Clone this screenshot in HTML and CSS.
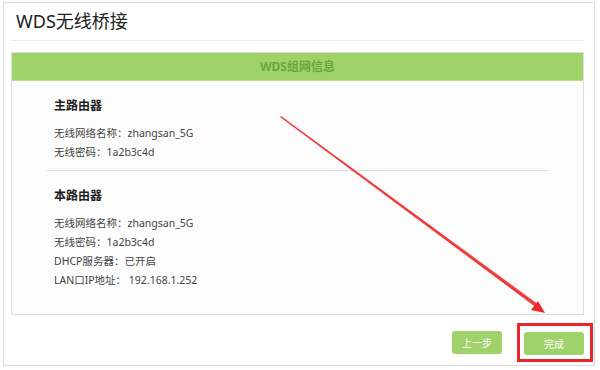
FILE: index.html
```html
<!DOCTYPE html>
<html>
  <head>
    <meta charset="utf-8">
    <title>WDS无线桥接</title>
    <link rel="stylesheet" href="styles.css">
  </head>
  <body>
    <div class="dialog">
      <h1 class="title">WDS无线桥接</h1>
      <div class="panel">
        <div class="panel-head">WDS组网信息</div>
        <div class="panel-body">
          <div class="group">
            <h2>主路由器</h2>
            <p>无线网络名称：zhangsan_5G</p>
            <p>无线密码：1a2b3c4d</p>
          </div>
          <div class="group">
            <h2>本路由器</h2>
            <p>无线网络名称：zhangsan_5G</p>
            <p>无线密码：1a2b3c4d</p>
            <p>DHCP服务器：已开启</p>
            <p>LAN口IP地址： 192.168.1.252</p>
          </div>
        </div>
      </div>
      <div class="actions">
        <button class="btn">上一步</button>
        <span class="mark"><button class="btn btn-wide">完成</button></span>
      </div>
      <!-- 红色箭头标注 -->
      <svg class="arrow" width="600" height="370" viewBox="0 0 600 370">
        <polygon points="280,117 281,116 539,305 537,308" fill="#ee3b3b"/>
        <polygon points="545,313 531,310 538,301" fill="#ee2a2a"/>
      </svg>
    </div>
  </body>
</html>
```

FILE: styles.css
```css
body {
  margin: 0;
  background: #fff;
  font-family: "Noto Sans", "Noto Sans CJK SC", sans-serif;
  color: #333;
}
/* 外框 */
.dialog {
  position: relative;
  margin: 2px 0 0 3px;
  width: 590px;
  height: 362px;
  border: 1px solid #dcdcdc;
}
.title {
  margin: 0 10px 0 6px;
  padding: 7px 0 8px 6px;
  height: 22px;
  line-height: 22px;
  font-size: 18px;
  font-weight: normal;
  color: #222;
  border-bottom: 1px solid #ececec;
}
/* 信息面板 */
.panel {
  margin: 11px 10px 0 7px;
  border: 1px solid #dedede;
  background: #fcfcfc;
}
.panel-head {
  height: 27px;
  line-height: 27px;
  background: #a0d26a;
  border-bottom: 1px solid #b9de92;
  text-align: center;
  font-size: 12px;
  font-weight: bold;
  color: #6aa83c;
}
.panel-body {
  padding: 17px 35px 24px 35px;
}
.group {
  padding-left: 7px;
}
.group + .group {
  margin-top: 8px;
  border-top: 1px solid #dcdcdc;
  padding-top: 17px;
}
.group h2 {
  margin: 0 0 10px;
  font-size: 12px;
  line-height: 16px;
  color: #222;
}
.group p {
  margin: 0;
  font-size: 10.5px;
  line-height: 19px;
  color: #444;
}
/* 底部按钮 */
.actions {
  display: flex;
  justify-content: flex-end;
  align-items: center;
  gap: 15px;
  padding: 8px 0 0 0;
}
.btn {
  width: 50px;
  height: 23px;
  padding: 0;
  border: none;
  border-radius: 3px;
  background: #9fd26a;
  color: #fff;
  font-family: "Noto Sans CJK SC", sans-serif;
  font-size: 10px;
}
.btn-wide {
  width: 60px;
}
.mark {
  display: block;
  padding: 5px 6px 4px 4px;
  border: 3px solid #e8272a;
  margin-right: 1px;
}
.arrow {
  position: absolute;
  left: -4px;
  top: -3px;
  pointer-events: none;
}
```
